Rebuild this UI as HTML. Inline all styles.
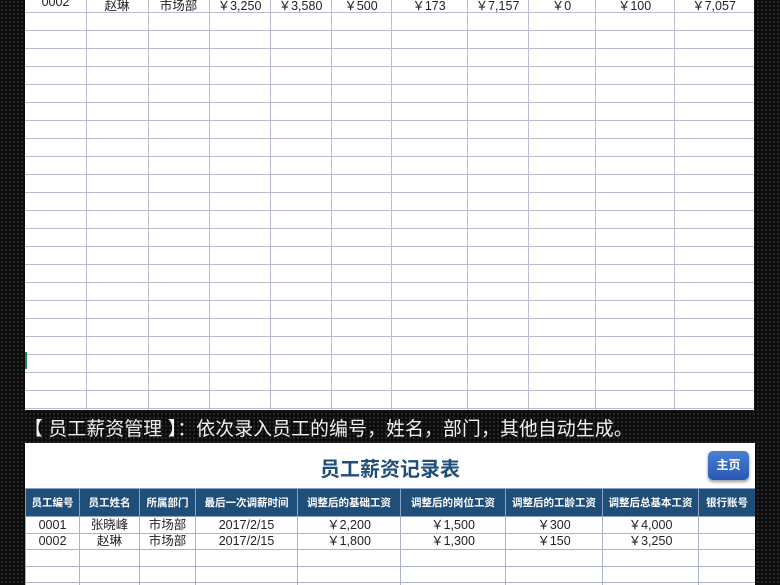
<!DOCTYPE html>
<html><head><meta charset="utf-8"><style>
*{margin:0;padding:0;box-sizing:border-box}
html,body{width:780px;height:585px;overflow:hidden}
body{position:relative;background:#0c0c0c;
background-image:radial-gradient(#2a2a2a 1px,transparent 1.2px);background-size:4px 4px;
font-family:"Liberation Sans","Noto Sans CJK SC",sans-serif}
.sheet{position:absolute;left:25px;top:0;width:729px;height:410px;background:#fff;
background-image:repeating-linear-gradient(to bottom,#b8bdd2 0 1px,transparent 1px 18px);background-position:0 12px}
.v{position:absolute;top:0;width:1px;background:#b8bdd2}
.t{position:absolute;top:-5px;font-size:12.5px;color:#222;text-align:center}
.cap{position:absolute;left:24px;top:414px;color:#f0f0f0;font-size:18.8px;letter-spacing:0.2px;white-space:nowrap}
.box{position:absolute;left:25px;top:443px;width:730px;height:142px;background:#fff;overflow:hidden}
.title{position:absolute;left:0;width:730px;top:10px;text-align:center;font-size:20px;font-weight:bold;color:#1f4e79}
.btn{position:absolute;left:683px;top:8px;width:41px;height:29px;border-radius:5px;background:linear-gradient(#4a7fd6,#2a58b0);color:#fff;font-size:12px;font-weight:bold;text-align:center;line-height:29px;box-shadow:0 2px 3px rgba(0,0,0,.4)}
table{position:absolute;left:0;top:45px;border-collapse:collapse;table-layout:fixed;width:730px}
th{background:#1f4e79;color:#fff;font-size:10.5px;height:28px;border:1px solid #8aa3c4;font-weight:bold;white-space:nowrap;overflow:hidden}
td{height:16.5px;border:1px solid #aab2cc;font-size:12.5px;text-align:center;color:#222;line-height:14px}
</style></head><body>
<div class="sheet">
<div class="v" style="left:61px;height:410px"></div>
<div class="v" style="left:123px;height:410px"></div>
<div class="v" style="left:184px;height:410px"></div>
<div class="v" style="left:245px;height:410px"></div>
<div class="v" style="left:306px;height:410px"></div>
<div class="v" style="left:366px;height:410px"></div>
<div class="v" style="left:442px;height:410px"></div>
<div class="v" style="left:503px;height:410px"></div>
<div class="v" style="left:570px;height:410px"></div>
<div class="v" style="left:649px;height:410px"></div>
<div class="t" style="left:0;width:61px">0002</div>
<div class="t" style="left:61px;width:62px">赵琳</div>
<div class="t" style="left:123px;width:61px">市场部</div>
<div class="t" style="left:184px;width:61px">￥3,250</div>
<div class="t" style="left:245px;width:61px">￥3,580</div>
<div class="t" style="left:306px;width:60px">￥500</div>
<div class="t" style="left:366px;width:76px">￥173</div>
<div class="t" style="left:442px;width:61px">￥7,157</div>
<div class="t" style="left:503px;width:67px">￥0</div>
<div class="t" style="left:570px;width:79px">￥100</div>
<div class="t" style="left:649px;width:80px">￥7,057</div>
<div style="position:absolute;left:0;top:352px;width:2px;height:17px;background:#1e8a4a"></div>
</div>
<div class="cap">【 员工薪资管理 】：依次录入员工的编号，姓名，部门，其他自动生成。</div>
<div class="box">
<div class="title">员工薪资记录表</div>
<div class="btn">主页</div>
<table>
<colgroup><col style="width:54px"><col style="width:60px"><col style="width:56px"><col style="width:102px"><col style="width:103px"><col style="width:105px"><col style="width:97px"><col style="width:96px"><col style="width:57px"></colgroup>
<tr><th>员工编号</th><th>员工姓名</th><th>所属部门</th><th>最后一次调薪时间</th><th>调整后的基础工资</th><th>调整后的岗位工资</th><th>调整后的工龄工资</th><th>调整后总基本工资</th><th>银行账号</th></tr>
<tr><td>0001</td><td>张晓峰</td><td>市场部</td><td>2017/2/15</td><td>￥2,200</td><td>￥1,500</td><td>￥300</td><td>￥4,000</td><td></td></tr>
<tr><td>0002</td><td>赵琳</td><td>市场部</td><td>2017/2/15</td><td>￥1,800</td><td>￥1,300</td><td>￥150</td><td>￥3,250</td><td></td></tr>
<tr><td></td><td></td><td></td><td></td><td></td><td></td><td></td><td></td><td></td></tr>
<tr><td></td><td></td><td></td><td></td><td></td><td></td><td></td><td></td><td></td></tr>
<tr><td></td><td></td><td></td><td></td><td></td><td></td><td></td><td></td><td></td></tr>
</table>
</div>
</body></html>
